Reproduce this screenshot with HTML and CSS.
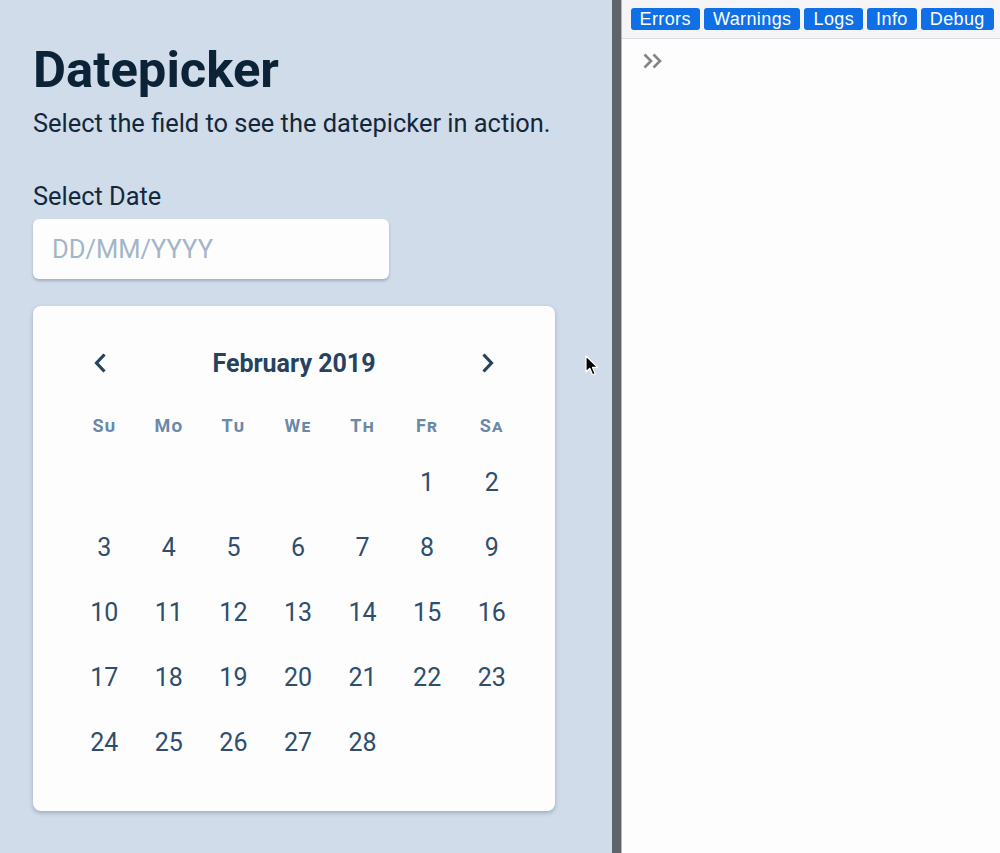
FILE: index.html
```html
<!DOCTYPE html>
<html lang="en">
<head>
<meta charset="utf-8">
<title>Datepicker</title>
<link rel="stylesheet" href="styles.css">
</head>
<body>
<div class="app">
  <main class="demo">
    <h1 class="title">Datepicker</h1>
    <p class="subtitle">Select the field to see the datepicker in action.</p>
    <label class="field-label" for="date">Select Date</label>
    <input class="date-input" id="date" type="text" placeholder="DD/MM/YYYY">
    <div class="calendar">
      <div class="cal-header">
        <button class="nav-btn" aria-label="Previous month">
          <svg width="14" height="20" viewBox="0 0 14 20"><path d="M11.5 1.5 L3.5 10 L11.5 18.5" fill="none" stroke="currentColor" stroke-width="3.2"/></svg>
        </button>
        <div class="month">February 2019</div>
        <button class="nav-btn" aria-label="Next month">
          <svg width="14" height="20" viewBox="0 0 14 20"><path d="M2.5 1.5 L10.5 10 L2.5 18.5" fill="none" stroke="currentColor" stroke-width="3.2"/></svg>
        </button>
      </div>
      <div class="grid">
        <div class="wd">Su</div><div class="wd">Mo</div><div class="wd">Tu</div><div class="wd">We</div><div class="wd">Th</div><div class="wd">Fr</div><div class="wd">Sa</div>
        <div class="day empty"></div><div class="day empty"></div><div class="day empty"></div><div class="day empty"></div><div class="day empty"></div><div class="day">1</div><div class="day">2</div>
        <div class="day">3</div><div class="day">4</div><div class="day">5</div><div class="day">6</div><div class="day">7</div><div class="day">8</div><div class="day">9</div>
        <div class="day">10</div><div class="day">11</div><div class="day">12</div><div class="day">13</div><div class="day">14</div><div class="day">15</div><div class="day">16</div>
        <div class="day">17</div><div class="day">18</div><div class="day">19</div><div class="day">20</div><div class="day">21</div><div class="day">22</div><div class="day">23</div>
        <div class="day">24</div><div class="day">25</div><div class="day">26</div><div class="day">27</div><div class="day">28</div><div class="day empty"></div><div class="day empty"></div>
      </div>
    </div>
    <svg class="cursor" width="14" height="22" viewBox="0 0 14 22"><path d="M1 1 L1 17 L4.8 13.3 L7.6 19.8 L10.2 18.7 L7.5 12.4 L12.6 12.4 Z" fill="#000" stroke="#fff" stroke-width="1.2" stroke-linejoin="round"/></svg>
  </main>
  <div class="divider"></div>
  <aside class="console">
    <div class="toolbar">
      <button class="tb-btn">Errors</button>
      <button class="tb-btn">Warnings</button>
      <button class="tb-btn">Logs</button>
      <button class="tb-btn">Info</button>
      <button class="tb-btn">Debug</button>
    </div>
    <div class="console-body">
      <svg class="prompt" width="19" height="16" viewBox="0 0 19 16"><path d="M1.5 1.5 L8 8 L1.5 14.5 M10.5 1.5 L17 8 L10.5 14.5" fill="none" stroke="#858587" stroke-width="2.6"/></svg>
    </div>
  </aside>
</div>
</body>
</html>
```

FILE: styles.css
```css
* { box-sizing: border-box; }
html, body { margin: 0; padding: 0; }
body {
  font-family: Roboto, "Liberation Sans", sans-serif;
  width: 1000px;
  height: 853px;
  overflow: hidden;
}
.app {
  display: flex;
  height: 853px;
}
.demo {
  position: relative;
  width: 612px;
  flex: none;
  background: #d0dce9;
  padding: 40px 0 0 33px;
  display: flex;
  flex-direction: column;
  align-items: flex-start;
}
.title {
  margin: 0;
  font-size: 50.8px;
  line-height: 60px;
  font-weight: 700;
  color: #0c2237;
}
.subtitle {
  margin: 8px 0 0;
  font-size: 25.4px;
  line-height: 30px;
  color: #13273b;
}
.field-label {
  margin-top: 44px;
  font-size: 25.4px;
  line-height: 28px;
  color: #13283d;
}
.date-input {
  margin-top: 9px;
  width: 356px;
  height: 60px;
  border: none;
  border-radius: 6px;
  background: #fdfdfe;
  box-shadow: 0 2px 3px rgba(40, 60, 90, 0.28);
  padding: 0 0 0 19px;
  font-family: Roboto, sans-serif;
  font-size: 25.5px;
  color: #13283d;
  outline: none;
}
.date-input::placeholder { color: #a3b5c8; }
.calendar {
  margin-top: 27px;
  width: 522px;
  background: #fdfdfe;
  border-radius: 8px;
  box-shadow: 0 2px 4px rgba(40, 60, 90, 0.3);
  padding: 27px 0 36px;
}
.cal-header {
  height: 60px;
  margin-bottom: 7px;
  padding: 0 47px;
  display: flex;
  align-items: center;
  justify-content: space-between;
}
.nav-btn {
  width: 40px;
  height: 40px;
  border: none;
  background: none;
  padding: 0;
  color: #26425f;
  display: flex;
  align-items: center;
  justify-content: center;
}
.month {
  font-size: 25px;
  font-weight: 700;
  color: #26425f;
}
.grid {
  margin: 0 31px 0 39px;
  display: grid;
  grid-template-columns: repeat(7, 1fr);
  grid-template-rows: 50px repeat(5, 65px);
}
.wd {
  display: flex;
  align-items: center;
  justify-content: center;
  font-size: 18px;
  font-weight: 700;
  font-variant: small-caps;
  letter-spacing: 1.2px;
  color: #6a89a8;
}
.day {
  display: flex;
  align-items: center;
  justify-content: center;
  font-size: 25px;
  color: #2e4e6e;
}
.cursor {
  position: absolute;
  left: 585px;
  top: 355px;
}
.divider {
  width: 10px;
  flex: none;
  background: #5f636a;
  border-right: 1px solid #b4b8be;
}
.console {
  flex: 1;
  display: flex;
  flex-direction: column;
  background: #fdfdfe;
}
.toolbar {
  height: 39px;
  flex: none;
  background: #f5f5f7;
  border-bottom: 1.5px solid #dcdcdf;
  display: flex;
  align-items: flex-start;
  gap: 4px;
  padding: 8px 0 0 8.5px;
}
.tb-btn {
  height: 22px;
  border: none;
  border-radius: 3px;
  background: #0e6fe6;
  color: #fff;
  font-family: "Liberation Sans", Arial, sans-serif;
  font-size: 18px;
  letter-spacing: 0.4px;
  line-height: 22px;
  padding: 0 9px;
}
.console-body {
  padding: 14px 0 0 21px;
}
.prompt { display: block; }
```
